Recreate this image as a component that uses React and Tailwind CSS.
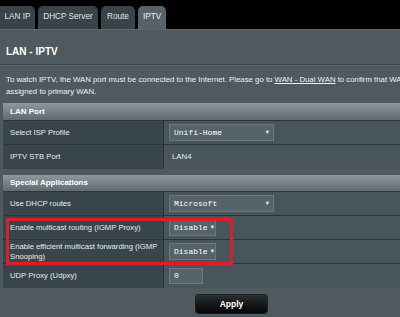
import React from 'react'

const tabs = ['LAN IP', 'DHCP Server', 'Route', 'IPTV']

function Caret() {
  return <span className="ml-auto text-[6px] leading-none text-[#e6eaec]">▼</span>
}

function Select({ value, width }) {
  return (
    <div
      className={`flex h-[17px] items-center gap-[3px] border border-[#6d797d] bg-[#56636a] px-[4px] font-['Liberation_Mono',monospace] text-[8px] text-white ${width}`}
    >
      <span>{value}</span>
      <Caret />
    </div>
  )
}

function Row({ label, children, last }) {
  return (
    <div className={`flex h-[24px] ${last ? '' : 'border-b border-[#2c3539]'}`}>
      <div className="flex w-[160px] shrink-0 items-center bg-[#38454a] pl-[7px] text-[7.7px] leading-[10px] text-[#e8ecee]">
        {label}
      </div>
      <div className="flex flex-1 items-center border-l border-[#2c3539] bg-[#48555a] pl-[5px] text-[#e8ecee]">
        {children}
      </div>
    </div>
  )
}

function Header({ title, h }) {
  return (
    <div
      className={`flex ${h} items-center border-b border-[#2c3539] bg-gradient-to-b from-[#8d999e] to-[#5f6b70] pl-[7px] text-[8px] font-bold text-white`}
    >
      {title}
    </div>
  )
}

export default function App() {
  return (
    <div className="relative flex h-[317px] w-[400px] flex-col overflow-hidden bg-black font-['Liberation_Sans',Arial,sans-serif] text-[7.8px]">
      {/* Tabs */}
      <div className="flex h-[29px] items-end gap-[3px] pt-[6px]">
        {tabs.map((t, i) => (
          <div
            key={t}
            className={`flex h-[23px] items-center justify-center rounded-t-[5px] text-[8.2px] ${
              i === 3 ? 'w-[28px] bg-[#56626a] text-[#eef1f2]' : 'bg-[#3a4448] text-[#dfe4e6]'
            } ${i === 0 ? 'w-[35px] rounded-tl-none' : ''} ${i === 1 ? 'w-[60px]' : ''} ${i === 2 ? 'w-[34px]' : ''}`}
          >
            {t}
          </div>
        ))}
      </div>

      {/* Content */}
      <div className="flex flex-1 flex-col bg-[#4e5a5f]">
        <div className="border-t border-[#5c686d] pl-[6px] pt-[16px] text-[10px] font-bold leading-[12px] text-white">
          LAN - IPTV
        </div>
        <div className="mt-[6px] h-[2px] border-t border-[#3b464a] border-b-[#5d696e] border-b" />
        <p className="mt-[8px] overflow-hidden pl-[6px] leading-[12px] whitespace-nowrap text-[#eef1f2]">
          To watch IPTV, the WAN port must be connected to the Internet. Please go to{' '}
          <span className="underline">WAN - Dual WAN</span> to confirm that WAN port is
          <br />
          assigned to primary WAN.
        </p>

        <div className="ml-[3px] mt-[5px] flex flex-col">
          <Header title="LAN Port" h="h-[18px]" />
          <Row label="Select ISP Profile">
            <Select value="Unifi-Home" width="w-[105px]" />
          </Row>
          <Row label="IPTV STB Port" last>
            <span className="pl-[3px]">LAN4</span>
          </Row>

          <div className="h-[6px] bg-[#4e5a5f]" />

          <Header title="Special Applications" h="h-[17px]" />
          <Row label="Use DHCP routes">
            <Select value="Microsoft" width="w-[105px]" />
          </Row>
          <Row label="Enable multicast routing (IGMP Proxy)">
            <Select value="Disable" width="w-[47px]" />
          </Row>
          <Row label="Enable efficient multicast forwarding (IGMP Snooping)">
            <Select value="Disable" width="w-[47px]" />
          </Row>
          <Row label="UDP Proxy (Udpxy)" last>
            <div className="flex h-[16px] w-[34px] items-center border border-[#6d797d] bg-[#56636a] pl-[4px] font-['Liberation_Mono',monospace] text-[8px] text-white">
              0
            </div>
          </Row>
        </div>

        <div className="mt-[7px] flex justify-center pl-[63px]">
          <button className="h-[18px] w-[71px] rounded-[3px] bg-gradient-to-b from-[#2a2f31] to-[#050607] text-[8.5px] font-bold text-white shadow-[0_0_0_1px_#1a1f21]">
            Apply
          </button>
        </div>
      </div>

      {/* Red annotation box */}
      <div className="pointer-events-none absolute left-[6px] top-[218px] h-[47px] w-[227px] border-[3px] border-[#d8202b]" />
    </div>
  )
}
